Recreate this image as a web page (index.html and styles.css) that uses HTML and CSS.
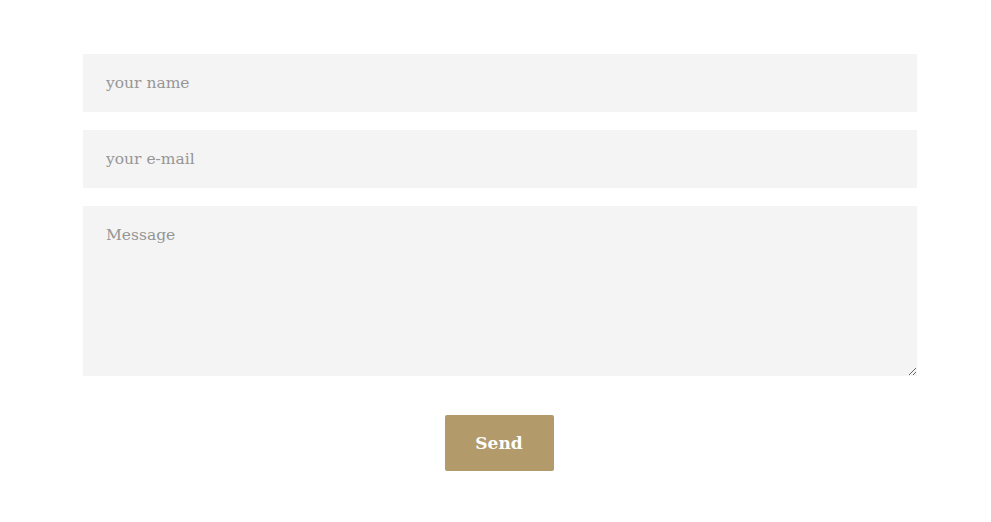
FILE: index.html
```html
<!DOCTYPE html>
<html>
<head>
<meta charset="utf-8">
<link rel="stylesheet" href="styles.css">
</head>
<body>
<form class="contact">
  <input class="field" type="text" placeholder="your name">
  <input class="field" type="email" placeholder="your e-mail">
  <textarea class="field area" placeholder="Message"></textarea>
  <div class="actions"><button type="button" class="send">Send</button></div>
</form>
</body>
</html>
```
FILE: styles.css
```css
html, body { margin: 0; padding: 0; background: #fff; }
.contact {
  width: 834px;
  margin: 54px 0 0 83px;
  display: flex;
  flex-direction: column;
  gap: 18px;
}
.field {
  box-sizing: border-box;
  width: 100%;
  height: 58px;
  border: none;
  outline: none;
  background-color: #f4f4f4;
  padding: 0 23px;
  font-family: "DejaVu Serif", "Liberation Serif", serif;
  font-size: 15.5px;
  color: #555;
  margin: 0;
}
.field::placeholder { color: #969696; }
.area {
  height: 170px;
  padding: 20px 23px;
  resize: vertical;
  display: block;
}
.actions {
  display: flex;
  justify-content: center;
  margin-top: 21px;
}
.send {
  width: 109px;
  height: 56px;
  margin-right: 2px;
  border: none;
  border-radius: 2px;
  background: #b39a6b;
  color: #fff;
  font-family: "DejaVu Serif", "Liberation Serif", serif;
  font-weight: bold;
  font-size: 17px;
  cursor: pointer;
}
```
